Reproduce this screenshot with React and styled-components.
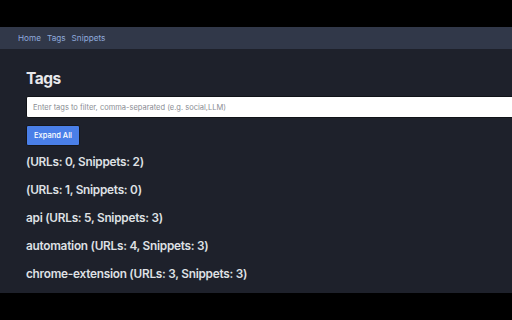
import React from "react";
import styled, { createGlobalStyle } from "styled-components";

const Global = createGlobalStyle`
  html, body { margin: 0; padding: 0; background: #000; overflow: hidden; }
  body { font-family: Inter, "Noto Sans", sans-serif; }
`;

const Screen = styled.div`
  width: 512px;
  height: 320px;
  display: flex;
  flex-direction: column;
  background: #000;
  overflow: hidden;
`;

const TopGap = styled.div`
  height: 27px;
  flex: none;
`;

const Nav = styled.nav`
  height: 22px;
  flex: none;
  background: #313849;
  display: flex;
  align-items: center;
  gap: 6px;
  padding-left: 18px;
`;

const NavLink = styled.a`
  color: #8fa9dc;
  font-size: 8.2px;
  text-decoration: none;
`;

const Main = styled.main`
  height: 244px;
  flex: none;
  background: #1e212b;
  padding: 20px 0 0 26px;
  box-sizing: border-box;
  display: flex;
  flex-direction: column;
  overflow: hidden;
`;

const Title = styled.h1`
  margin: 0;
  font-size: 15.5px;
  font-weight: 700;
  letter-spacing: -0.5px;
  color: #e8e9ec;
  line-height: 20px;
`;

const Input = styled.input`
  margin-top: 7px;
  width: 600px;
  height: 22px;
  box-sizing: border-box;
  border: 1px solid #111318;
  border-radius: 2px;
  background: #fff;
  padding: 0 6px;
  font-family: Inter, sans-serif;
  font-size: 7.5px;
  outline: none;
  &::placeholder { color: #8a8d93; }
`;

const Button = styled.button`
  margin-top: 7px;
  align-self: flex-start;
  width: 54px;
  height: 21px;
  box-sizing: border-box;
  background: #4a7fe8;
  color: #fff;
  border: 1px solid #15171d;
  border-radius: 2px;
  font-family: Inter, sans-serif;
  font-size: 7.5px;
  font-weight: 500;
  padding: 0;
`;

const List = styled.div`
  display: flex;
  flex-direction: column;
  margin-top: 2px;
`;

const Item = styled.div`
  height: 28px;
  line-height: 28px;
  color: #dfe0e4;
  font-size: 11.8px;
  font-weight: 600;
  letter-spacing: -0.25px;
  white-space: nowrap;
`;

const items = [
  "(URLs: 0, Snippets: 2)",
  "(URLs: 1, Snippets: 0)",
  "api (URLs: 5, Snippets: 3)",
  "automation (URLs: 4, Snippets: 3)",
  "chrome-extension (URLs: 3, Snippets: 3)",
];

export default function App() {
  return (
    <Screen>
      <Global />
      <TopGap />
      <Nav>
        <NavLink href="#">Home</NavLink>
        <NavLink href="#">Tags</NavLink>
        <NavLink href="#">Snippets</NavLink>
      </Nav>
      <Main>
        <Title>Tags</Title>
        <Input placeholder="Enter tags to filter, comma-separated (e.g. social,LLM)" />
        <Button>Expand All</Button>
        <List>
          {items.map((t) => (
            <Item key={t}>{t}</Item>
          ))}
        </List>
      </Main>
    </Screen>
  );
}
